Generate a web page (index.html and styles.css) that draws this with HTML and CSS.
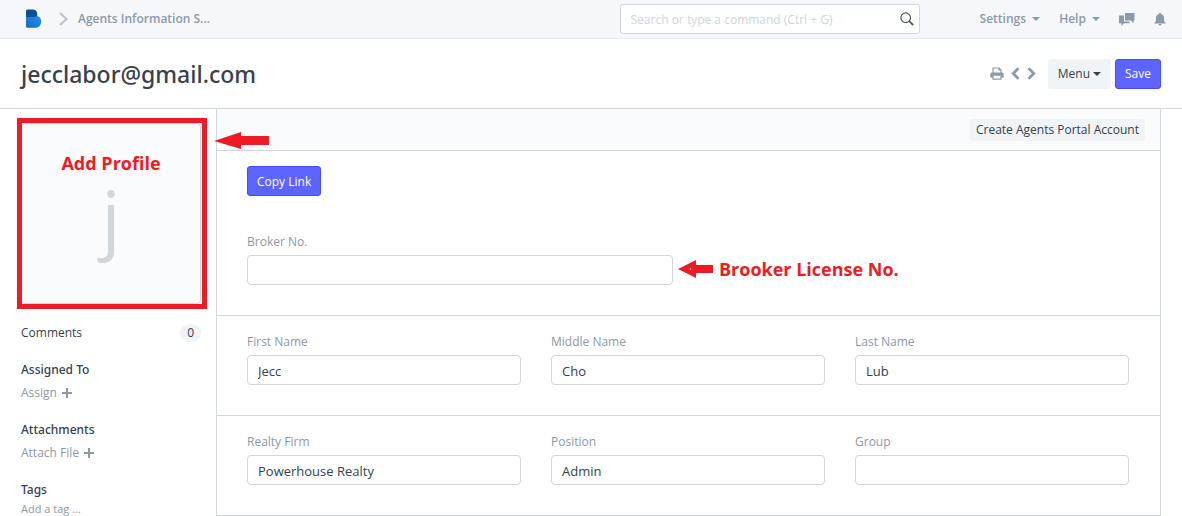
FILE: index.html
```html
<!DOCTYPE html>
<html lang="en">
<head>
<meta charset="utf-8">
<meta name="viewport" content="width=device-width, initial-scale=1">
<title>jecclabor@gmail.com</title>
<link rel="stylesheet" href="styles.css">
</head>
<body>
<header class="navbar">
  <div class="container navbar-inner">
    <a class="brand" href="#" aria-label="Home">
      <svg width="17" height="20" viewBox="0 0 17 20">
        <defs><linearGradient id="lobe" x1="0" y1="1" x2="1" y2="0"><stop offset="0" stop-color="#0f6fc6"/><stop offset="1" stop-color="#2f8fea"/></linearGradient></defs>
        <path d="M1 5h9.500l1.500 2c2.600.3 4.200 2.600 4.200 5.400 0 3.600-2.400 6.300-5.700 6.300H2.500A1.500 1.500 0 0 1 1 17.200z" fill="url(#lobe)"/>
        <path d="M1 1.900A1.500 1.500 0 0 1 2.500.4H8c3.300 0 4.800 3 4.200 6.800-2-.2-3 .8-5 .8H2.500A1.500 1.500 0 0 1 1 6.500z" fill="#04538f"/>
      </svg>
    </a>
    <svg class="crumb-sep" width="9" height="14" viewBox="0 0 9 14"><path d="M1 1l6.500 6L1 13" fill="none" stroke="#b8c2cc" stroke-width="2"/></svg>
    <a class="nav-link" href="#">Agents Information S...</a>
    <form class="search">
      <input class="search-input" type="text" aria-label="Search" placeholder="Search or type a command (Ctrl + G)">
      <svg class="search-icon" width="14" height="14" viewBox="0 0 14 14"><circle cx="5.700" cy="5.700" r="4.800" fill="none" stroke="#4c5660" stroke-width="1.200"/><path d="M9.200 9.200l4 4" stroke="#4c5660" stroke-width="1.800"/></svg>
    </form>
    <nav class="nav-right">
      <a class="nav-link" href="#">Settings <span class="caret"></span></a>
      <a class="nav-link" href="#">Help <span class="caret"></span></a>
      <a class="nav-icon" href="#" aria-label="Chat"><svg width="16" height="13" viewBox="0 0 16 13" fill="#8d99a6"><path d="M6 0h9.500v7.500H14.500v2.700L11.800 7.500H6z"/><path d="M0 2.500h5v6h5.500v1.800H5L2.500 13v-2.700H0z"/></svg></a>
      <a class="nav-icon" href="#" aria-label="Notifications"><svg width="12" height="13" viewBox="0 0 12 13" fill="#8d99a6"><path d="M6 0c.7 0 1 .4 1 1 2 .5 3 2 3 4 0 3 .6 4.200 2 5.500H0C1.400 9.200 2 8 2 5c0-2 1-3.500 3-4 0-.6.300-1 1-1zM4.500 11h3a1.500 1.500 0 0 1-3 0z"/></svg></a>
    </nav>
  </div>
</header>

<div class="page-head">
  <div class="container page-head-inner">
    <h1 class="title">jecclabor@gmail.com</h1>
    <div class="actions">
      <button class="icon-btn" aria-label="Print"><svg width="14" height="13" viewBox="0 0 14 13"><path d="M3 6V1h6l2 2v3M9 1v2h2" fill="none" stroke="#8d99a6" stroke-width="1.200"/><path d="M2 5.500h10a1.700 1.700 0 0 1 1.700 1.700V10.500H11V8.700H3v1.800H.3V7.200A1.700 1.700 0 0 1 2 5.500z" fill="#8d99a6"/><path d="M3 9v3.200h8V9" fill="none" stroke="#8d99a6" stroke-width="1.200"/></svg></button>
      <button class="icon-btn" aria-label="Previous"><svg width="9" height="13" viewBox="0 0 9 13"><path d="M7.500 1.200L2.200 6.500l5.300 5.300" fill="none" stroke="#8d99a6" stroke-width="2.800"/></svg></button>
      <button class="icon-btn" aria-label="Next"><svg width="9" height="13" viewBox="0 0 9 13"><path d="M1.500 1.200l5.300 5.300-5.300 5.300" fill="none" stroke="#8d99a6" stroke-width="2.800"/></svg></button>
      <button class="btn btn-menu">Menu<span class="caret"></span></button>
      <button class="btn btn-primary">Save</button>
    </div>
  </div>
</div>

<div class="container layout">
  <aside class="sidebar">
    <div class="profile">
      <span class="profile-letter">j</span>
      <div class="callout-frame"></div>
      <strong class="note profile-note">Add Profile</strong>
      <svg class="profile-arrow" width="55" height="18" viewBox="0 0 55 18"><path d="M0 9L27 0v4h28v9H27v4z" fill="#ed1c24"/></svg>
    </div>
    <div class="side-row"><a href="#">Comments</a><span class="count">0</span></div>
    <section class="side-group">
      <h2>Assigned To</h2>
      <button class="side-action">Assign <svg width="10" height="10" viewBox="0 0 10 10"><path d="M5 0v10M0 5h10" stroke="#8d99a6" stroke-width="2"/></svg></button>
    </section>
    <section class="side-group">
      <h2>Attachments</h2>
      <button class="side-action">Attach File <svg width="10" height="10" viewBox="0 0 10 10"><path d="M5 0v10M0 5h10" stroke="#8d99a6" stroke-width="2"/></svg></button>
    </section>
    <section class="side-group">
      <h2>Tags</h2>
      <input class="tag-input" type="text" aria-label="Add a tag" placeholder="Add a tag ...">
    </section>
  </aside>

  <main class="form">
    <div class="form-toolbar"><button class="btn-small">Create Agents Portal Account</button></div>
    <section class="form-section">
      <button class="btn btn-primary copy">Copy Link</button>
      <div class="fields two">
        <div class="field">
          <label for="broker">Broker No.</label>
          <input id="broker" type="text">
          <div class="broker-note">
            <svg width="35" height="18" viewBox="0 0 35 18"><path d="M0 9L18 0v5h17v8H18v5z" fill="#ed1c24"/><circle cx="12.500" cy="9" r=".8" fill="#fff"/></svg>
            <strong class="note">Brooker License No.</strong>
          </div>
        </div>
      </div>
    </section>
    <section class="form-section">
      <div class="fields">
        <div class="field"><label for="first">First Name</label><input id="first" type="text" value="Jecc"></div>
        <div class="field"><label for="middle">Middle Name</label><input id="middle" type="text" value="Cho"></div>
        <div class="field"><label for="last">Last Name</label><input id="last" type="text" value="Lub"></div>
      </div>
    </section>
    <section class="form-section">
      <div class="fields">
        <div class="field"><label for="firm">Realty Firm</label><input id="firm" type="text" value="Powerhouse Realty"></div>
        <div class="field"><label for="position">Position</label><input id="position" type="text" value="Admin"></div>
        <div class="field"><label for="group">Group</label><input id="group" type="text"></div>
      </div>
    </section>
  </main>
</div>
</body>
</html>
```
FILE: styles.css
```css
* { box-sizing: border-box; }
body {
  margin: 0;
  background: #fff;
  color: #36414c;
  font: 12px/18px "Open Sans", "Noto Sans", sans-serif;
}
a { color: inherit; text-decoration: none; }
button, input { font: inherit; color: inherit; }
button { cursor: pointer; }
svg { display: block; flex: none; }

.container { max-width: 1182px; margin: 0 auto; padding: 0 21px; }
.caret {
  display: inline-block;
  border: 4px solid transparent;
  border-top-color: currentColor;
  border-bottom: 0;
  margin-left: 3px;
  vertical-align: 2px;
}

.navbar { background: #f5f7fa; border-bottom: 1px solid #e4eaef; }
.navbar-inner { display: flex; align-items: center; height: 38px; }
.brand { margin-left: 4px; }
.crumb-sep { margin: 0 10px 0 17px; }
.nav-link { color: #8d99a6; font-weight: 600; }
.search { position: relative; width: 300px; margin-left: auto; }
.search-input {
  display: block;
  width: 100%;
  height: 30px;
  padding: 0 34px 0 10px;
  border: 1px solid #d1d8dd;
  border-radius: 3px;
  background: #fff;
}
.search-input::placeholder { color: #ced6de; opacity: 1; }
.search-icon { position: absolute; right: 6px; top: 8px; }
.nav-right { display: flex; align-items: center; gap: 19px; margin: 0 -5px 0 60px; }

.page-head { border-bottom: 1px solid #d1d8dd; }
.page-head-inner { display: flex; align-items: center; justify-content: space-between; height: 69px; }
.title { margin: 0; font-family: "Noto Sans", sans-serif; font-size: 23px; line-height: 32px; font-weight: 500; }
.actions { display: flex; align-items: center; gap: 4px; }
.icon-btn { padding: 0; border: 0; background: none; margin-right: 3px; }
.icon-btn:nth-of-type(3) { margin-right: 8px; }
.btn { height: 30px; padding: 1px 9px 0; border: 1px solid transparent; border-radius: 3px; }
.btn-menu { background: #f0f4f7; }
.btn-primary { background: #5e64ff; border-color: #444bff; color: #fff; }

.layout { display: grid; grid-template-columns: 180px minmax(0, 1fr); column-gap: 15px; align-items: start; }
.sidebar { padding-top: 14px; }
.profile {
  position: relative;
  display: flex;
  justify-content: center;
  align-items: center;
  height: 181px;
  border: 1px solid #d1d8dd;
  border-radius: 4px;
  background: #fafbfc;
}
.profile-letter { padding-top: 4px; color: #d1d8dd; font-size: 75px; line-height: 72px; }
.callout-frame { position: absolute; inset: -6px -7px -6px -5px; border: 5px solid #ed1c24; }
.note { color: #ed1c24; font-size: 18px; line-height: 24px; font-weight: 700; white-space: nowrap; }
.profile-note { position: absolute; top: 27px; left: 0; right: 0; text-align: center; }
.profile-arrow { position: absolute; left: 192px; top: 8px; }

.side-row { display: flex; justify-content: space-between; align-items: center; height: 20px; margin-top: 19px; }
.count { padding: 0 7px; border-radius: 10px; background: #f0f4f7; }
.side-group { margin-top: 18px; }
.side-group h2 { margin: 0; font-family: "Noto Sans", sans-serif; font-size: 12px; line-height: 18px; font-weight: 500; }
.side-action {
  display: flex;
  align-items: center;
  gap: 5px;
  margin-top: 5px;
  padding: 0;
  border: 0;
  background: none;
  color: #8d99a6;
}
.side-action + .side-group, .side-group + .side-group { margin-top: 19px; }
.tag-input { display: block; width: 100%; height: 18px; margin-top: 1px; padding: 0; border: 0; font-size: 11px; }
.tag-input::placeholder { color: #8d99a6; opacity: 1; }

.form { border: 1px solid #d1d8dd; border-top: 0; }
.form-toolbar {
  display: flex;
  justify-content: flex-end;
  align-items: center;
  height: 42px;
  padding: 0 15px;
  background: #fafbfc;
  border-bottom: 1px solid #d1d8dd;
}
.btn-small { height: 22px; padding: 0 6px; border: 0; border-radius: 3px; background: #f0f4f7; }
.form-section { padding: 17px 31px 30px 30px; }
.form-section + .form-section { border-top: 1px solid #d1d8dd; }
.form-section:first-of-type { padding-top: 15px; }
.copy { display: block; margin-bottom: 37px; }
.fields { display: grid; grid-template-columns: repeat(3, minmax(0, 1fr)); column-gap: 30px; }
.fields.two { grid-template-columns: repeat(2, minmax(0, 1fr)); }
.field { position: relative; }
.field label { display: block; margin-bottom: 4px; color: #8d99a6; }
.field input {
  display: block;
  width: 100%;
  height: 30px;
  padding: 2px 10px 0;
  border: 1px solid #d1d8dd;
  border-radius: 4px;
  background: #fff;
  font-size: 13px;
}
.broker-note { position: absolute; left: 100%; bottom: 4px; display: flex; align-items: center; gap: 6px; margin-left: 5px; }
```
